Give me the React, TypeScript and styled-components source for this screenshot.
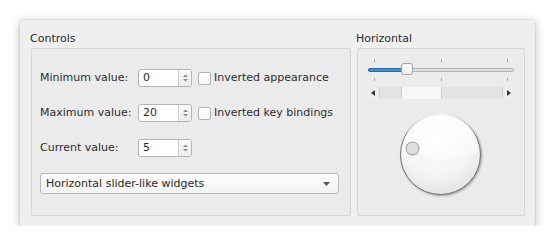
import React from "react";
import styled, { createGlobalStyle } from "styled-components";

const Global = createGlobalStyle`
  html, body { margin: 0; padding: 0; background: #ffffff; }
  body { font-family: "DejaVu Sans", "Liberation Sans", sans-serif; font-size: 11px; color: #2b2b2b; }
`;

const Window = styled.div`
  box-sizing: border-box;
  margin: 20px 0 0 20px;
  width: 515px;
  height: 206px;
  background: #efefef;
  box-shadow: 0 2px 9px rgba(0, 0, 0, 0.28), 0 0 1px rgba(0, 0, 0, 0.25);
  padding: 12px 10px 0 11px;
  display: flex;
  gap: 6px;
`;

const Column = styled.div<{ $w: number }>`
  display: flex;
  flex-direction: column;
  width: ${(p) => p.$w}px;
`;

const Title = styled.div`
  line-height: 13px;
  height: 13px;
  margin-left: -1px;
`;

const Frame = styled.div`
  box-sizing: border-box;
  margin-top: 3px;
  height: 168px;
  border: 1px solid #d5d5d5;
  border-radius: 2px;
  background: #ebebeb;
`;

const ControlsFrame = styled(Frame)`
  padding: 20px 0 0 8px;
`;

const Grid = styled.div`
  display: grid;
  grid-template-columns: 92px 54px auto;
  grid-auto-rows: 18px;
  column-gap: 6px;
  row-gap: 17px;
  align-items: center;
`;

const Label = styled.div`
  line-height: 18px;
`;

const Spin = styled.div`
  box-sizing: border-box;
  width: 54px;
  height: 18px;
  border: 1px solid #b4b4b4;
  border-radius: 3px;
  background: #ffffff;
  display: flex;
`;

const SpinText = styled.div`
  flex: 1;
  padding-left: 4px;
  line-height: 16px;
`;

const SpinButtons = styled.div`
  width: 12px;
  border-left: 1px solid #cdcdcd;
  background: linear-gradient(#fbfbfb, #ececec);
  border-radius: 0 2px 2px 0;
  display: flex;
  align-items: center;
  justify-content: center;
`;

const Check = styled.label`
  display: flex;
  align-items: center;
  gap: 3px;
  line-height: 18px;
  white-space: nowrap;
`;

const Box = styled.span`
  box-sizing: border-box;
  width: 13px;
  height: 13px;
  border: 1px solid #b4b4b4;
  border-radius: 2px;
  background: linear-gradient(#ffffff, #f6f6f6);
`;

const Combo = styled.div`
  box-sizing: border-box;
  margin-top: 16px;
  width: 299px;
  height: 21px;
  border: 1px solid #b8b8b8;
  border-radius: 3px;
  background: linear-gradient(#fdfdfd, #f3f3f3);
  display: flex;
  align-items: center;
  padding: 0 8px 0 5px;
`;

const ComboText = styled.div`
  flex: 1;
  line-height: 19px;
`;

const HorizFrame = styled(Frame)`
  display: flex;
  flex-direction: column;
  align-items: center;
  padding-top: 9px;
`;

const Slider = styled.div`
  position: relative;
  width: 146px;
  height: 24px;
`;

const Tick = styled.span<{ $bottom?: boolean }>`
  position: absolute;
  top: ${(p) => (p.$bottom ? 20 : 1)}px;
  width: 1px;
  height: 3px;
  background: #a8a8a8;
`;

const Groove = styled.div`
  position: absolute;
  left: 0;
  right: 0;
  top: 10px;
  height: 4px;
  box-sizing: border-box;
  border: 1px solid #b3b3b3;
  border-radius: 2px;
  background: #e2e2e2;
`;

const GrooveFill = styled.div`
  position: absolute;
  left: 0;
  top: 10px;
  height: 4px;
  box-sizing: border-box;
  border: 1px solid #2a6ca8;
  border-radius: 2px;
  background: #3d8ed6;
`;

const Handle = styled.div`
  position: absolute;
  top: 5px;
  width: 12px;
  height: 12px;
  box-sizing: border-box;
  border: 1px solid #a3a3a3;
  border-radius: 3px;
  background: linear-gradient(#ffffff, #ececec);
`;

const ScrollBar = styled.div`
  margin-top: 5px;
  width: 148px;
  height: 12px;
  display: flex;
  background: #e4e4e4;
`;

const ScrollButton = styled.div`
  width: 12px;
  height: 12px;
  background: #ededed;
  display: flex;
  align-items: center;
  justify-content: center;
`;

const Trough = styled.div`
  position: relative;
  flex: 1;
  border-left: 1px solid #d2d2d2;
  border-right: 1px solid #d2d2d2;
  background: #e3e3e3;
`;

const ScrollHandle = styled.div`
  position: absolute;
  top: 0;
  bottom: 0;
  width: 41px;
  box-sizing: border-box;
  border-left: 1px solid #cfcfcf;
  border-right: 1px solid #cfcfcf;
  background: #f7f7f7;
`;

const DialSvg = styled.svg`
  margin-top: 13px;
  display: block;
`;

const Arrows = () => (
  <svg width="7" height="10" viewBox="0 0 7 10">
    <path d="M1 4 L3.5 1.5 L6 4 Z" fill="#8a8a8a" />
    <path d="M1 6 L3.5 8.5 L6 6 Z" fill="#8a8a8a" />
  </svg>
);

const Spinbox = ({ value }: { value: string }) => (
  <Spin>
    <SpinText>{value}</SpinText>
    <SpinButtons>
      <Arrows />
    </SpinButtons>
  </Spin>
);

const Checkbox = ({ label }: { label: string }) => (
  <Check>
    <Box />
    {label}
  </Check>
);

const Dial = () => (
  <DialSvg width="86" height="86" viewBox="0 0 86 86">
    <defs>
      <radialGradient id="dialFill" cx="0.45" cy="0.3" r="0.75">
        <stop offset="0" stopColor="#ffffff" />
        <stop offset="0.6" stopColor="#f4f4f4" />
        <stop offset="1" stopColor="#e2e2e2" />
      </radialGradient>
      <linearGradient id="dialHi" x1="0" y1="0" x2="0" y2="1">
        <stop offset="0" stopColor="#ffffff" stopOpacity="0.9" />
        <stop offset="1" stopColor="#ffffff" stopOpacity="0.2" />
      </linearGradient>
      <filter id="dialShadow" x="-20%" y="-20%" width="140%" height="140%">
        <feGaussianBlur in="SourceAlpha" stdDeviation="1.2" />
        <feOffset dx="0.5" dy="1" result="b" />
        <feComponentTransfer>
          <feFuncA type="linear" slope="0.35" />
        </feComponentTransfer>
        <feMerge>
          <feMergeNode />
          <feMergeNode in="SourceGraphic" />
        </feMerge>
      </filter>
    </defs>
    <circle cx="42.5" cy="42.5" r="40" fill="url(#dialFill)" stroke="#6d6d6d" strokeWidth="1" filter="url(#dialShadow)" />
    <path d="M4 40 A38.5 38.5 0 0 1 81 40 Q42.5 56 4 40 Z" fill="url(#dialHi)" />
    <circle cx="14.5" cy="36.5" r="6.5" fill="#dedede" stroke="#9b9b9b" strokeWidth="1" />
  </DialSvg>
);

export default function App() {
  const value = 5;
  const min = 0;
  const max = 20;
  const frac = (value - min) / (max - min);
  const handleLeft = Math.round(6 + frac * 133) - 6;
  const scrollLeft = Math.round(frac * 82);

  return (
    <>
      <Global />
      <Window>
        <Column $w={320}>
          <Title>Controls</Title>
          <ControlsFrame>
            <Grid>
              <Label>Minimum value:</Label>
              <Spinbox value="0" />
              <Checkbox label="Inverted appearance" />
              <Label>Maximum value:</Label>
              <Spinbox value="20" />
              <Checkbox label="Inverted key bindings" />
              <Label>Current value:</Label>
              <Spinbox value="5" />
              <span />
            </Grid>
            <Combo>
              <ComboText>Horizontal slider-like widgets</ComboText>
              <svg width="7" height="4" viewBox="0 0 7 4">
                <path d="M0 0 L7 0 L3.5 4 Z" fill="#555555" />
              </svg>
            </Combo>
          </ControlsFrame>
        </Column>
        <Column $w={168}>
          <Title>Horizontal</Title>
          <HorizFrame>
            <Slider>
              {[6, 73, 139].map((x) => (
                <Tick key={"t" + x} style={{ left: x }} />
              ))}
              {[6, 73, 139].map((x) => (
                <Tick key={"b" + x} $bottom style={{ left: x }} />
              ))}
              <Groove />
              <GrooveFill style={{ width: handleLeft + 4 }} />
              <Handle style={{ left: handleLeft }} />
            </Slider>
            <ScrollBar>
              <ScrollButton>
                <svg width="4" height="6" viewBox="0 0 4 6">
                  <path d="M4 0 L0 3 L4 6 Z" fill="#3a3a3a" />
                </svg>
              </ScrollButton>
              <Trough>
                <ScrollHandle style={{ left: scrollLeft }} />
              </Trough>
              <ScrollButton>
                <svg width="4" height="6" viewBox="0 0 4 6">
                  <path d="M0 0 L4 3 L0 6 Z" fill="#3a3a3a" />
                </svg>
              </ScrollButton>
            </ScrollBar>
            <Dial />
          </HorizFrame>
        </Column>
      </Window>
    </>
  );
}
